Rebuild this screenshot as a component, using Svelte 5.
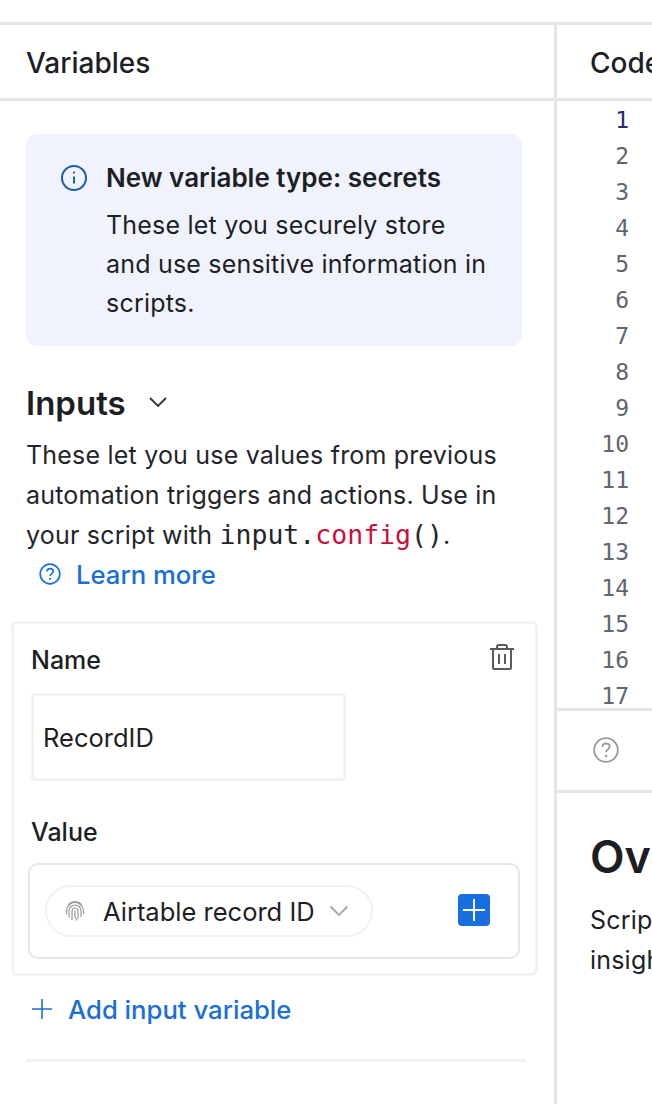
<script>
  const lineNumbers = Array.from({ length: 17 }, (_, i) => i + 1);
</script>

<div class="page">
  <section class="variables">
    <header class="pane-head">Variables</header>

    <div class="pane-body">
      <div class="notice">
        <svg class="notice-icon" viewBox="0 0 28 28" width="28" height="28" fill="none" stroke="#1a5ea8" stroke-width="2">
          <circle cx="14" cy="14" r="12" />
          <path d="M14 12.5v7" />
          <circle cx="14" cy="8.6" r="1.1" fill="#1a5ea8" stroke="none" />
        </svg>
        <div>
          <h4>New variable type: secrets</h4>
          <p>These let you securely store and use sensitive information in scripts.</p>
        </div>
      </div>

      <div class="inputs-title">
        <h3>Inputs</h3>
        <svg viewBox="0 0 18 12" width="18" height="12" fill="none" stroke="#333" stroke-width="1.8">
          <path d="M1 2l8 8 8-8" />
        </svg>
      </div>

      <p class="intro">
        These let you use values from previous automation triggers and actions. Use in your script with
        <code>input.<span class="fn">config</span>()</code>.
      </p>

      <a class="learn" href="#learn">
        <svg viewBox="0 0 22 22" width="22" height="22" fill="none" stroke="#1a73e0" stroke-width="1.7">
          <circle cx="11" cy="11" r="9.8" />
          <path d="M8 8.6c0-1.8 1.4-2.9 3.1-2.9s3 1.1 3 2.7c0 2.4-3 2.4-3 4.6" />
          <circle cx="11.1" cy="15.8" r="1.1" fill="#1a73e0" stroke="none" />
        </svg>
        Learn more
      </a>

      <div class="input-card">
        <div class="name-row">
          <span class="label">Name</span>
          <svg viewBox="0 0 24 26" width="24" height="26" fill="none" stroke="#5a5a5a" stroke-width="2">
            <path d="M0 5h24M7 5V3q0-2 2-2h6q2 0 2 2v2M3 5v19q0 1 1 1h16q1 0 1-1V5M9 10v10M15 10v10" />
          </svg>
        </div>
        <div class="name-field">RecordID</div>

        <span class="label value-label">Value</span>
        <div class="value-box">
          <div class="pill">
            <svg viewBox="0 0 22 22" width="22" height="22" fill="none" stroke="#9a9a9a" stroke-width="1.2">
              <path d="M4.500 4.500a9 9 0 0 1 13 0M2.500 14.500V11a8.500 8.500 0 0 1 17 0v3" />
              <path d="M5 17.500V11a6 6 0 0 1 12 0v6M8 20V11a3 3 0 0 1 6 0v8M11 10.500v5c0 2 .8 3.800 2 5" />
            </svg>
            <span>Airtable record ID</span>
            <svg viewBox="0 0 20 12" width="20" height="12" fill="none" stroke="#a6a6a6" stroke-width="1.8">
              <path d="M1.500 1.500L10 10l8.500-8.500" />
            </svg>
          </div>
          <button class="add-square" aria-label="Add value">
            <svg viewBox="0 0 32 32" width="32" height="32" stroke="#fff" stroke-width="2">
              <path d="M16 5v22M5 16h22" />
            </svg>
          </button>
        </div>
      </div>

      <a class="add-input" href="#add">
        <svg viewBox="0 0 20 20" width="20" height="20" stroke="#1a6fd6" stroke-width="1.600">
          <path d="M10 0v20M0 10h20" />
        </svg>
        Add input variable
      </a>

      <div class="divider"></div>
    </div>
  </section>

  <section class="code">
    <header class="pane-head">Code</header>
    <div class="gutter">
      {#each lineNumbers as n}
        <div class="line-no" class:active={n === 1}>{n}</div>
      {/each}
    </div>
    <div class="toolbar">
      <svg viewBox="0 0 26 26" width="26" height="26" fill="none" stroke="#9a9a9a" stroke-width="1.800">
        <circle cx="13" cy="13" r="11.800" />
        <path d="M9.500 10c0-2.200 1.600-3.500 3.600-3.500s3.500 1.300 3.500 3.200c0 2.800-3.500 2.800-3.500 5.400" />
        <circle cx="13.100" cy="19" r="1.200" fill="#9a9a9a" stroke="none" />
      </svg>
    </div>
    <div class="overview">
      <h2>Overview</h2>
      <p>Scripting lets you build custom tools and<br />insights</p>
    </div>
  </section>
</div>

<style>
  :global(body) {
    margin: 0;
    background: #fff;
  }

  .page {
    display: grid;
    grid-template-columns: 554px 98px;
    width: 652px;
    height: 1104px;
    padding-top: 22px;
    box-sizing: border-box;
    overflow: hidden;
    font-family: Inter, "Noto Sans", sans-serif;
    color: #1d1f25;
  }

  .pane-head {
    height: 73px;
    border-top: 3px solid #e5e5e5;
    border-bottom: 3px solid #e5e5e5;
    padding-left: 26px;
    font-size: 28px;
    font-weight: 500;
    line-height: 76px;
    white-space: nowrap;
  }

  .pane-body {
    padding: 33px 32px 0 26px;
  }

  .notice {
    display: flex;
    gap: 18px;
    height: 212px;
    box-sizing: border-box;
    padding: 29px 28px 0 34px;
    background: #f0f3fe;
    border-radius: 12px;
  }

  .notice-icon {
    flex: none;
    margin-top: 1px;
  }

  .notice h4 {
    margin: 0;
    font-size: 26px;
    font-weight: 600;
    line-height: 30px;
  }

  .notice p {
    margin: 13px 0 0;
    font-size: 25px;
    letter-spacing: 0.2px;
    line-height: 39px;
  }

  .inputs-title {
    display: flex;
    align-items: center;
    gap: 23px;
    margin-top: 36px;
    height: 42px;
  }

  .inputs-title h3 {
    margin: 0;
    font-size: 33px;
    font-weight: 600;
    line-height: 42px;
  }

  .inputs-title svg {
    margin-top: -3px;
  }

  .intro {
    margin: 11px 0 0;
    font-size: 25px;
    letter-spacing: 0.2px;
    line-height: 40px;
    color: #23252a;
  }

  code {
    font-family: "DejaVu Sans Mono", "Liberation Mono", monospace;
    font-size: 26.5px;
    letter-spacing: 0;
    line-height: 1;
  }

  .fn {
    color: #c8103f;
  }

  .learn,
  .add-input {
    display: flex;
    align-items: center;
    color: #1a6fd6;
    font-size: 25.7px;
    font-weight: 500;
    text-decoration: none;
  }

  .learn {
    gap: 15px;
    height: 40px;
    margin: -1px 0 0 13px;
  }

  .input-card {
    width: 527px;
    height: 355px;
    box-sizing: border-box;
    margin: 27px 0 0 -15px;
    padding: 19px 3px 0 17px;
    border: 3px solid #f2f2f2;
    border-radius: 6px;
  }

  .name-row {
    display: flex;
    align-items: center;
    justify-content: space-between;
    height: 34px;
    padding-right: 18px;
  }

  .name-row svg {
    margin-top: -6px;
  }

  .label {
    display: block;
    font-size: 25px;
    font-weight: 500;
    line-height: 34px;
  }

  .name-field {
    width: 315px;
    height: 88px;
    box-sizing: border-box;
    margin-top: 16px;
    padding-left: 9px;
    border: 3px solid #f2f2f2;
    border-radius: 4px;
    font-size: 25.500px;
    line-height: 83px;
  }

  .value-label {
    margin-top: 34px;
  }

  .value-box {
    display: flex;
    align-items: center;
    justify-content: space-between;
    width: 492px;
    height: 96px;
    box-sizing: border-box;
    margin: 14px 0 0 -3px;
    padding: 0 28px 0 15px;
    border: 2px solid #e6e6e6;
    border-radius: 10px;
  }

  .pill {
    display: flex;
    align-items: center;
    height: 52px;
    box-sizing: border-box;
    padding: 0 22px 0 17px;
    border: 2px solid #f2f2f2;
    border-radius: 26px;
    font-size: 25.500px;
    white-space: nowrap;
  }

  .pill span {
    margin: 0 14px 0 17px;
  }

  .add-square {
    display: block;
    width: 32px;
    height: 32px;
    margin-top: -3px;
    padding: 0;
    border: 0;
    border-radius: 4px;
    background: #166ee1;
  }

  .add-square svg {
    display: block;
  }

  .add-input {
    gap: 16px;
    height: 40px;
    margin: 13px 0 0 6px;
  }

  .divider {
    width: 500px;
    height: 3px;
    margin-top: 30px;
    background: #f2f2f2;
  }

  .code {
    border-left: 3px solid #e5e5e5;
    min-width: 0;
    overflow: hidden;
  }

  .code .pane-head {
    padding-left: 33px;
  }

  .gutter {
    height: 607px;
    box-sizing: border-box;
    padding-top: 1px;
    overflow: hidden;
  }

  .line-no {
    width: 72px;
    height: 36px;
    font-family: "DejaVu Sans Mono", "Liberation Mono", monospace;
    font-size: 23px;
    line-height: 36px;
    text-align: right;
    color: #62656e;
  }

  .line-no.active {
    color: #1c2d78;
  }

  .toolbar {
    display: flex;
    align-items: center;
    padding: 0 0 2px 36px;
    box-sizing: border-box;
    height: 85px;
    border-top: 3px solid #e5e5e5;
    border-bottom: 3px solid #e5e5e5;
  }

  .overview {
    width: 500px;
    padding: 36px 0 0 33px;
  }

  .overview h2 {
    margin: 0;
    font-size: 45px;
    font-weight: 600;
    line-height: 56px;
  }

  .overview p {
    margin: 15px 0 0;
    font-size: 25px;
    letter-spacing: 0.2px;
    line-height: 40px;
    white-space: nowrap;
  }
</style>
